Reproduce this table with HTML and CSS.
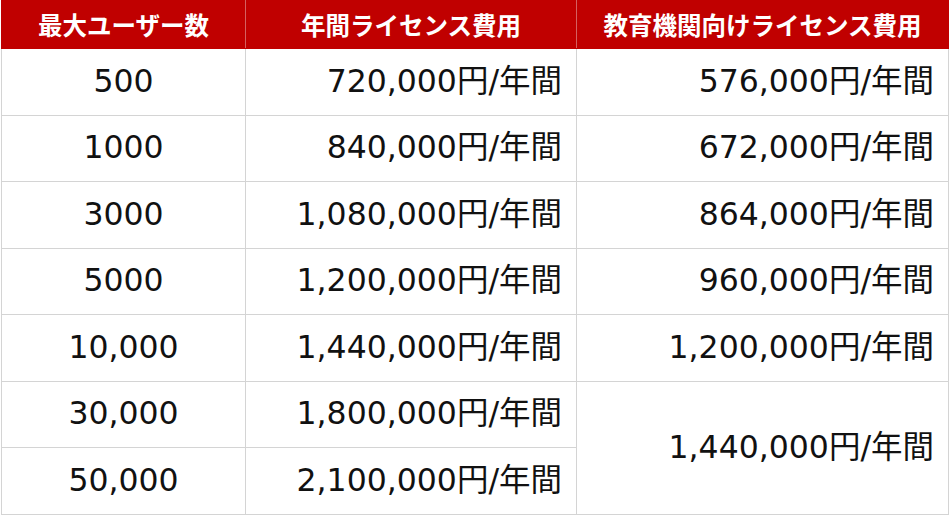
FILE: index.html
```html
<!DOCTYPE html>
<html lang="ja">
<head>
<meta charset="utf-8">
<link rel="stylesheet" href="styles.css">
</head>
<body>
<table class="price">
  <colgroup>
    <col class="c1"><col class="c2"><col class="c3">
  </colgroup>
  <thead>
    <tr><th>最大ユーザー数</th><th>年間ライセンス費用</th><th>教育機関向けライセンス費用</th></tr>
  </thead>
  <tbody>
    <tr><td class="users">500</td><td>720,000円/年間</td><td>576,000円/年間</td></tr>
    <tr><td class="users">1000</td><td>840,000円/年間</td><td>672,000円/年間</td></tr>
    <tr><td class="users">3000</td><td>1,080,000円/年間</td><td>864,000円/年間</td></tr>
    <tr><td class="users">5000</td><td>1,200,000円/年間</td><td>960,000円/年間</td></tr>
    <tr><td class="users">10,000</td><td>1,440,000円/年間</td><td>1,200,000円/年間</td></tr>
    <tr><td class="users">30,000</td><td>1,800,000円/年間</td><td rowspan="2">1,440,000円/年間</td></tr>
    <tr><td class="users">50,000</td><td>2,100,000円/年間</td></tr>
  </tbody>
</table>
</body>
</html>
```
FILE: styles.css
```css
html, body {
  margin: 0;
  padding: 0;
  background: #ffffff;
}
.price {
  border-collapse: collapse;
  table-layout: fixed;
  width: 948px;
  margin-left: 1px;
  font-family: "DejaVu Sans", "Noto Sans CJK JP", sans-serif;
  color: #111111;
}
.c1 { width: 244px; }
.c2 { width: 331px; }
.c3 { width: 372px; }
.price th {
  background: #c00000;
  color: #ffffff;
  font-family: "Noto Sans CJK JP", sans-serif;
  font-weight: 700;
  font-size: 24.5px;
  line-height: 1.2;
  height: 47px;
  padding: 0;
  border: 1px solid #c00000;
  border-right-color: #d46060;
  text-align: center;
  vertical-align: middle;
}
.price th:last-child { border-right-color: #c00000; }
.price td {
  height: 65.5px;
  padding: 0 14px 0 0;
  border: 1px solid #d4d4d4;
  font-size: 31.5px;
  line-height: 1.2;
  text-align: right;
  vertical-align: middle;
  white-space: nowrap;
}
.price td.users {
  text-align: center;
  padding: 0;
}
```
